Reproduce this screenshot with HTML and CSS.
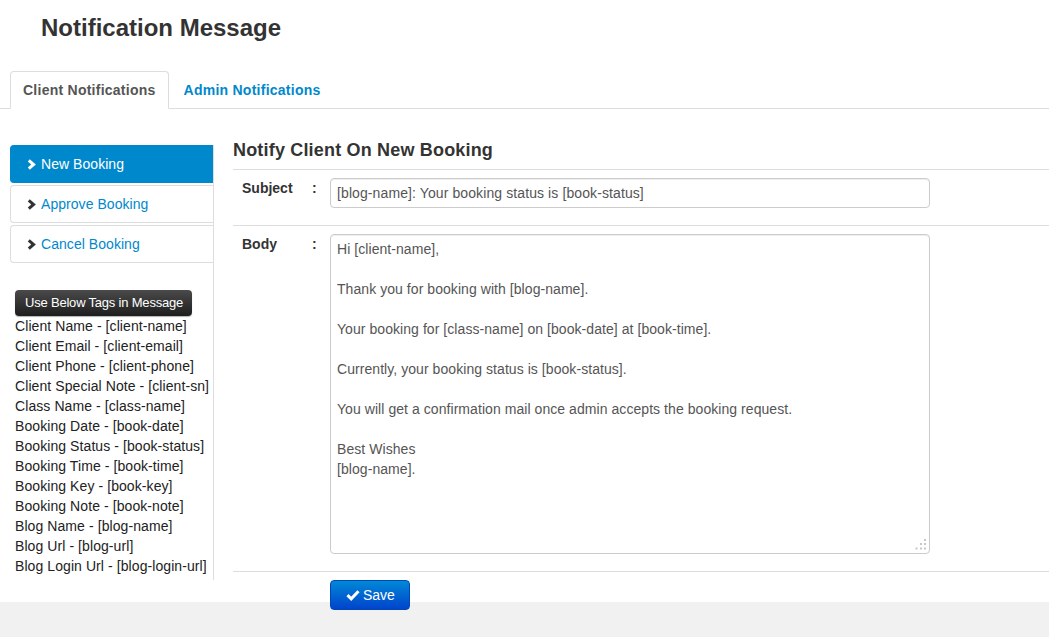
FILE: index.html
```html
<!DOCTYPE html>
<html>
<head>
<meta charset="utf-8">
<title>Notification Message</title>
<link rel="stylesheet" href="styles.css">
</head>
<body>
<div class="page">
  <h1 class="title">Notification Message</h1>
  <ul class="tabs">
    <li class="tab tab-active">Client Notifications</li>
    <li class="tab">Admin Notifications</li>
  </ul>
  <div class="layout">
    <aside class="sidebar">
      <ul class="nav">
        <li class="nav-item nav-active"><svg class="chev" viewBox="0 0 9 11" width="9" height="11"><polyline points="1.8,1.3 6.6,5.5 1.8,9.7"/></svg>New Booking</li>
        <li class="nav-item"><svg class="chev" viewBox="0 0 9 11" width="9" height="11"><polyline points="1.8,1.3 6.6,5.5 1.8,9.7"/></svg>Approve Booking</li>
        <li class="nav-item"><svg class="chev" viewBox="0 0 9 11" width="9" height="11"><polyline points="1.8,1.3 6.6,5.5 1.8,9.7"/></svg>Cancel Booking</li>
      </ul>
      <div class="tag-label">Use Below Tags in Message</div>
      <ul class="tag-list">
        <li>Client Name - [client-name]</li>
        <li>Client Email - [client-email]</li>
        <li>Client Phone - [client-phone]</li>
        <li>Client Special Note - [client-sn]</li>
        <li>Class Name - [class-name]</li>
        <li>Booking Date - [book-date]</li>
        <li>Booking Status - [book-status]</li>
        <li>Booking Time - [book-time]</li>
        <li>Booking Key - [book-key]</li>
        <li>Booking Note - [book-note]</li>
        <li>Blog Name - [blog-name]</li>
        <li>Blog Url - [blog-url]</li>
        <li>Blog Login Url - [blog-login-url]</li>
      </ul>
    </aside>
    <main class="content">
      <h2 class="section-title">Notify Client On New Booking</h2>
      <div class="form-row">
        <label class="label">Subject</label>
        <span class="colon">:</span>
        <input class="field" type="text" value="[blog-name]: Your booking status is [book-status]">
      </div>
      <div class="form-row">
        <label class="label">Body</label>
        <span class="colon">:</span>
        <div class="area-wrap">
          <textarea class="field area">Hi [client-name],

Thank you for booking with [blog-name].

Your booking for [class-name] on [book-date] at [book-time].

Currently, your booking status is [book-status].

You will get a confirmation mail once admin accepts the booking request.

Best Wishes
[blog-name].</textarea>
          <svg class="grip" viewBox="0 0 12 12" width="12" height="12"><rect x="9" y="0" width="2" height="2"/><rect x="5" y="4" width="2" height="2"/><rect x="9" y="4" width="2" height="2"/><rect x="0.5" y="8.5" width="2" height="2"/><rect x="5" y="8.5" width="2" height="2"/><rect x="9" y="8.5" width="2" height="2"/></svg>
        </div>
      </div>
      <button class="btn-save" type="button"><svg class="check" viewBox="0 0 14 12" width="14" height="12"><polyline points="1.5,6.2 5.2,9.8 12.5,2.2"/></svg>Save</button>
    </main>
  </div>
</div>
<footer class="footer"></footer>
</body>
</html>
```

FILE: styles.css
```css
* { box-sizing: border-box; }

html, body {
  margin: 0;
  padding: 0;
}

body {
  background: #f1f1f1;
  font-family: "Liberation Sans", Arial, sans-serif;
  font-size: 14px;
  color: #333;
}

.page {
  background: #fff;
}

.footer {
  height: 35px;
  margin-top: -8px;
  background: #f1f1f1;
}

.title {
  margin: 0;
  padding: 14px 0 0 41px;
  font-size: 24px;
  line-height: 28px;
  font-weight: bold;
  color: #333;
}

.tabs {
  list-style: none;
  margin: 29px 0 0;
  padding: 0 0 0 10px;
  display: flex;
  border-bottom: 1px solid #ddd;
}

.tab {
  padding: 8px 12px;
  line-height: 20px;
  font-size: 14px;
  font-weight: bold;
  letter-spacing: 0.25px;
  color: #0088cc;
  border: 1px solid transparent;
  border-radius: 4px 4px 0 0;
  margin: 0 2px -1px 0;
}

.tab-active {
  color: #555;
  background: #fff;
  border-color: #ddd #ddd transparent;
}

.layout {
  display: flex;
  align-items: flex-start;
  margin-top: 36px;
}

.sidebar {
  margin-left: 10px;
  width: 204px;
  border-right: 1px solid #ddd;
  padding-bottom: 4px;
}

.nav {
  list-style: none;
  margin: 0;
  padding: 0;
}

.nav-item {
  display: flex;
  align-items: center;
  height: 38px;
  padding: 0 0 0 16px;
  margin-bottom: 2px;
  border: 1px solid #ddd;
  border-right: none;
  border-radius: 4px 0 0 4px;
  color: #0088cc;
  font-size: 14px;
  line-height: 20px;
  letter-spacing: 0.05px;
}

.nav-active {
  background: #0088cc;
  border-color: #0088cc;
  color: #fff;
}

.chev {
  margin-right: 5px;
  fill: none;
  stroke: #333;
  stroke-width: 3;
  stroke-linejoin: miter;
}

.nav-active .chev { stroke: #fff; }

.tag-label {
  display: inline-block;
  margin: 25px 0 0 5px;
  padding: 0 9px 0 10px;
  height: 26px;
  line-height: 26px;
  font-size: 13px;
  letter-spacing: -0.2px;
  color: #fff;
  border-radius: 4px;
  background: linear-gradient(#4a4a4a, #1e1e1e);
  box-shadow: 0 1px 1px rgba(0,0,0,0.3);
}

.tag-list {
  list-style: none;
  margin: 0;
  padding: 0 0 0 5px;
  font-size: 14px;
  line-height: 20px;
  letter-spacing: 0.08px;
  color: #222;
}

.content {
  flex: 1;
  margin-left: 19px;
}

.section-title {
  margin: -5px 0 0;
  font-size: 18px;
  line-height: 20px;
  font-weight: bold;
  letter-spacing: 0.18px;
  color: #333;
  padding-bottom: 9px;
  border-bottom: 1px solid #ddd;
}

.form-row {
  display: flex;
  align-items: flex-start;
  padding: 8px 0 17px;
  border-bottom: 1px solid #ddd;
}

.label {
  width: 79px;
  padding-left: 9px;
  font-weight: bold;
  font-size: 14px;
  line-height: 20px;
  color: #333;
}

.colon {
  width: 18px;
  font-weight: bold;
  line-height: 20px;
  color: #333;
}

.field {
  width: 600px;
  height: 30px;
  margin: 0;
  padding: 4px 6px;
  border: 1px solid #ccc;
  border-radius: 4px;
  font-family: "Liberation Sans", Arial, sans-serif;
  font-size: 14px;
  line-height: 20px;
  letter-spacing: 0.1px;
  color: #555;
  background: #fff;
  box-shadow: inset 0 1px 1px rgba(0,0,0,0.075);
  outline: none;
}

.area-wrap {
  position: relative;
  width: 600px;
  height: 320px;
}

.area {
  display: block;
  height: 320px;
  resize: none;
  overflow: hidden;
  letter-spacing: 0.06px;
}

.grip {
  position: absolute;
  right: 3px;
  bottom: 3px;
  fill: #c8c8c8;
}

.btn-save {
  position: relative;
  z-index: 1;
  display: flex;
  align-items: center;
  margin: 8px 0 0 97px;
  width: 80px;
  height: 30px;
  padding: 0 0 0 15px;
  border: 1px solid #0047b8;
  border-radius: 4px;
  background: linear-gradient(#0088d6, #0044cc);
  color: #fff;
  font-family: "Liberation Sans", Arial, sans-serif;
  font-size: 14px;
  line-height: 20px;
  cursor: pointer;
}

.check {
  margin-right: 3px;
  fill: none;
  stroke: #fff;
  stroke-width: 3;
}
```
